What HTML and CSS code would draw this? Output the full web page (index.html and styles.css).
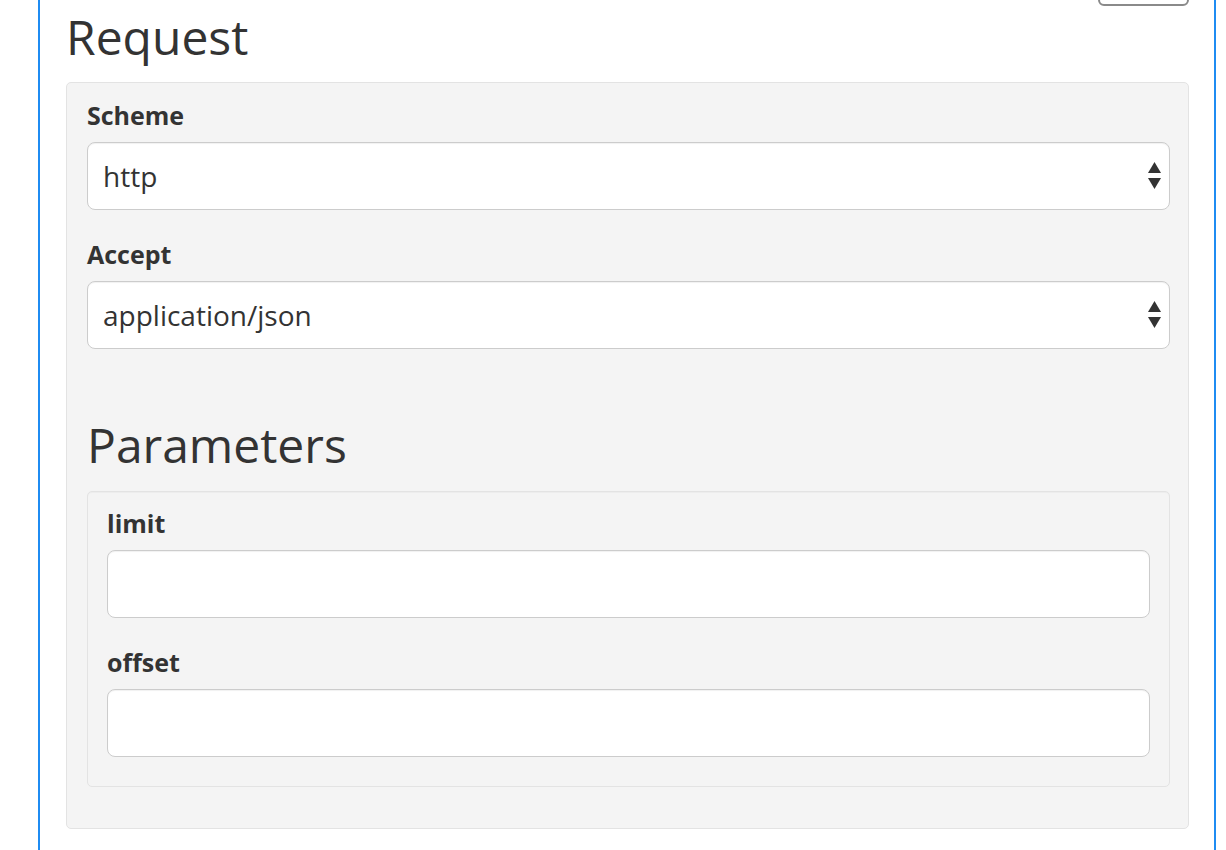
FILE: index.html
```html
<!DOCTYPE html>
<html lang="en">
<head>
<meta charset="utf-8">
<title>Request</title>
<link rel="stylesheet" href="styles.css">
</head>
<body>
<div class="page">
  <div class="toolbar"><button class="top-btn" type="button" aria-label="Try it out"></button></div>
  <h2 class="title">Request</h2>
  <div class="panel">
    <div class="group">
      <label class="label" for="scheme">Scheme</label>
      <div class="select-wrap">
        <select id="scheme" class="control select"><option>http</option><option>https</option></select>
        <svg class="arrows" width="13" height="27" viewBox="0 0 13 27" aria-hidden="true"><polygon points="6.5,0 13,11 0,11"/><polygon points="0,16 13,16 6.5,27"/></svg>
      </div>
    </div>
    <div class="group">
      <label class="label" for="accept">Accept</label>
      <div class="select-wrap">
        <select id="accept" class="control select"><option>application/json</option></select>
        <svg class="arrows" width="13" height="27" viewBox="0 0 13 27" aria-hidden="true"><polygon points="6.5,0 13,11 0,11"/><polygon points="0,16 13,16 6.5,27"/></svg>
      </div>
    </div>
    <h2 class="title sub">Parameters</h2>
    <div class="panel inner">
      <div class="group">
        <label class="label" for="limit">limit</label>
        <input id="limit" class="control" type="text">
      </div>
      <div class="group">
        <label class="label" for="offset">offset</label>
        <input id="offset" class="control" type="text">
      </div>
    </div>
  </div>
</div>
</body>
</html>
```

FILE: styles.css
```css
html, body {
  margin: 0;
  padding: 0;
  background: #ffffff;
}

body {
  font-family: "Open Sans", "Liberation Sans", sans-serif;
  color: #333333;
  overflow: hidden;
}

.page {
  box-sizing: border-box;
  width: 1178px;
  min-height: 850px;
  margin-left: 38px;
  border-left: 2px solid #1f8cf2;
  border-right: 2px solid #1f8cf2;
  padding: 0 25px 0 26px;
}

.toolbar {
  display: flex;
  justify-content: flex-end;
  height: 6px;
}

.top-btn {
  box-sizing: border-box;
  width: 91px;
  height: 44px;
  margin-top: -38px;
  border: 2px solid #8a8a8a;
  border-radius: 6px;
  background: #ffffff;
}

.title {
  margin: 5px 0 19px;
  font-size: 48px;
  font-weight: 400;
  line-height: 52px;
  color: #333333;
}

.title.sub {
  margin: 70px 0 20px;
}

.panel {
  border: 1px solid #e3e3e3;
  border-radius: 5px;
  background: #f4f4f4;
  padding: 18px 18px 41px 20px;
}

.panel.inner {
  padding: 17px 19px 29px;
  box-shadow: inset 0 1px 1px rgba(0, 0, 0, 0.03);
}

.group {
  margin-bottom: 30px;
}

.inner .group:last-child {
  margin-bottom: 0;
}

.label {
  display: block;
  font-size: 25px;
  font-weight: 700;
  line-height: 28px;
  margin-bottom: 13px;
  color: #333333;
}

.control {
  display: block;
  box-sizing: border-box;
  width: 100%;
  height: 68px;
  margin: 0;
  padding: 0 15px;
  border: 1px solid #cccccc;
  border-radius: 8px;
  background: #ffffff;
  color: #333333;
  font-family: inherit;
  font-size: 28px;
  box-shadow: inset 0 1px 1px rgba(0, 0, 0, 0.06);
  outline: none;
}

.select-wrap {
  position: relative;
}

.select {
  -webkit-appearance: none;
  appearance: none;
}

.arrows {
  position: absolute;
  right: 9px;
  top: 20px;
  fill: #333333;
  pointer-events: none;
}
```
